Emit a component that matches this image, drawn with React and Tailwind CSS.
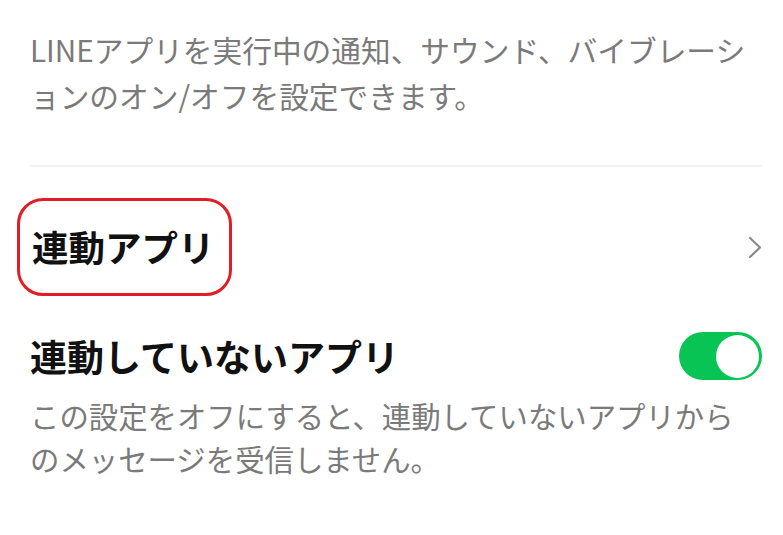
export default function App() {
  return (
    <div
      className="w-[783px] h-[535px] bg-white overflow-hidden"
      style={{ fontFamily: '"Noto Sans CJK JP", "Noto Sans", sans-serif' }}
    >
      <div className="pl-[30px] pr-[21px]">
        <p className="pt-[27px] text-[29.7px] leading-[46px] text-[#7a7a7a] whitespace-nowrap">
          LINEアプリを実行中の通知、サウンド、バイブレーシ
          <br />
          ョンのオン/オフを設定できます。
        </p>
        <div className="mt-[46px] h-[2px] bg-[#f3f3f3]" />
        <div className="mt-[31px] flex items-center justify-between">
          <div className="-ml-[13px] flex h-[98px] w-[215px] items-center rounded-[26px] border-[3px] border-[#e01e26] pl-[12px]">
            <span className="text-[36.5px] font-bold leading-none text-[#111]">連動アプリ</span>
          </div>
          <svg width="14" height="23" viewBox="0 0 14 23">
            <path d="M2 2 L12 11.5 L2 21" fill="none" stroke="#8a8a8a" strokeWidth="2.2" strokeLinecap="round" strokeLinejoin="round" />
          </svg>
        </div>
        <div className="mt-[36px] flex items-center justify-between">
          <span className="text-[37px] font-bold leading-[48px] text-[#111]">連動していないアプリ</span>
          <div className="flex h-[48px] w-[83px] items-center justify-end rounded-full bg-[#08c454] pr-[3px]">
            <div className="h-[43px] w-[43px] rounded-full bg-white" />
          </div>
        </div>
        <p className="mt-[14px] text-[29.4px] leading-[43px] text-[#7a7a7a] whitespace-nowrap">
          この設定をオフにすると、連動していないアプリから
          <br />
          のメッセージを受信しません。
        </p>
      </div>
    </div>
  );
}
